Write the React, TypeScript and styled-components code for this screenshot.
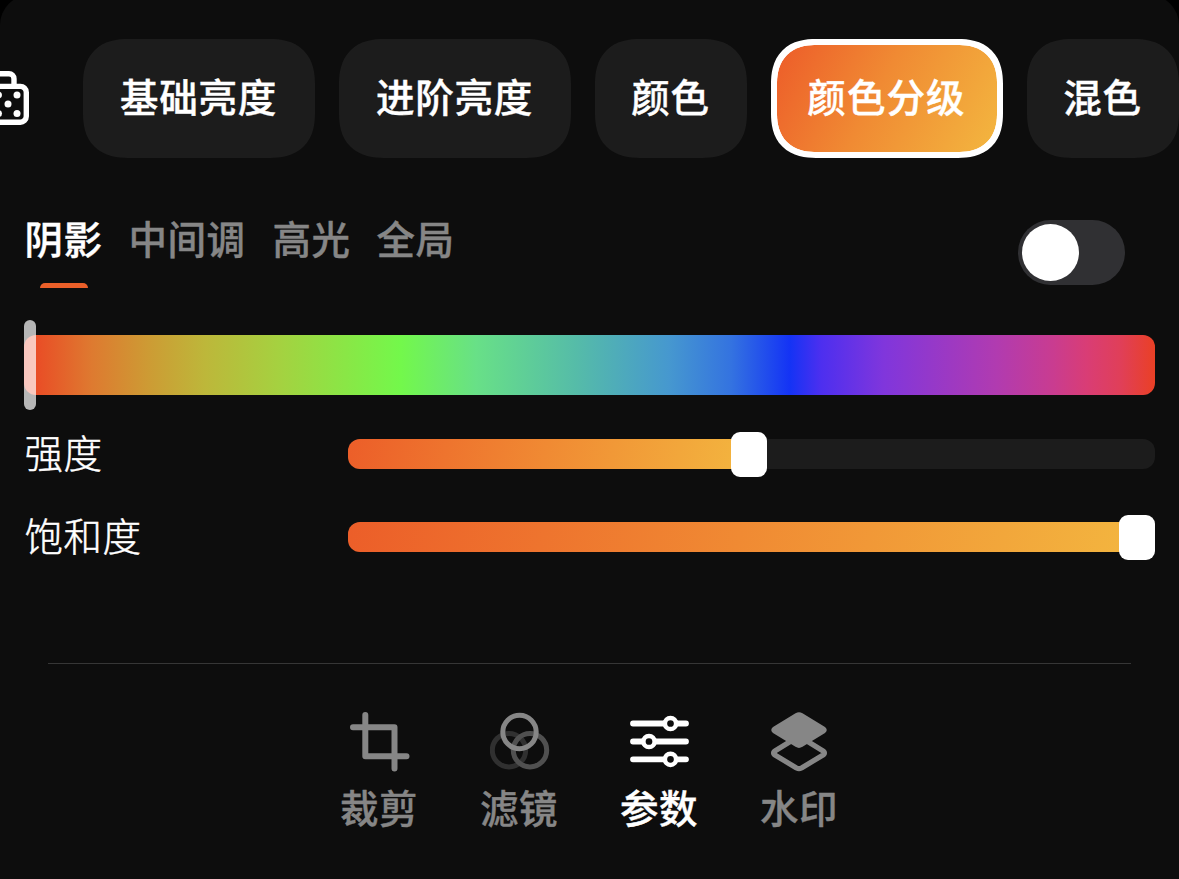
import React from "react";
import styled, { createGlobalStyle } from "styled-components";

const GlobalStyle = createGlobalStyle`
  * { box-sizing: border-box; }
  html, body { margin: 0; background: #000; }
  body { overflow: hidden; font-family: "Noto Sans CJK SC", sans-serif; }
  button { border: 0; padding: 0; background: none; font: inherit; color: inherit; }
`;

const Viewport = styled.div`
  height: 879px;
  overflow: hidden;
`;

const Sheet = styled.main`
  display: flex;
  flex-direction: column;
  height: 884px;
  margin-top: -5px;
  padding-top: 44px;
  background: #0d0d0d;
  border-radius: 30px 30px 0 0;
  color: #fff;
  overflow: hidden;
`;

const ChipRow = styled.nav`
  display: flex;
  align-items: center;
  gap: 24px;
  height: 119px;
`;

const DiceButton = styled.button`
  flex: none;
  width: 59px;
  height: 60px;
  svg { display: block; }
`;

const Chip = styled.button<{ $chars: number; $active?: boolean }>`
  flex: none;
  width: ${(p) => p.$chars * 40 + 72}px;
  height: 119px;
  border-radius: 39px;
  padding: 0 1px 7px 0;
  font-size: 38.5px;
  line-height: 56px;
  font-weight: 500;
  -webkit-text-stroke: 0.4px currentColor;
  letter-spacing: ${(p) => (p.$active ? "1.1px" : "0.7px")};
  background: ${(p) =>
    p.$active ? "linear-gradient(118deg, #ed5f2a 3%, #f08a33 45%, #f3b53f 98%) padding-box, #fff border-box" : "#1c1c1c"};
  border: ${(p) => (p.$active ? "6px solid #fff" : "0")};
  @supports (corner-shape: superellipse(1.25)) {
    border-radius: 45px;
    corner-shape: superellipse(1.25);
  }
`;

const RangeRow = styled.div`
  display: flex;
  justify-content: space-between;
  height: 162px;
  padding: 57px 54px 0 24px;
`;

const Tabs = styled.div`
  display: flex;
  gap: 24px;
`;

const Tab = styled.button<{ $chars: number; $active?: boolean }>`
  display: flex;
  flex-direction: column;
  align-items: flex-start;
  width: ${(p) => p.$chars * 40}px;
  height: 73px;
  font-size: 38.5px;
  line-height: 45px;
  font-weight: 500;
  letter-spacing: 0.5px;
  -webkit-text-stroke: 0.4px currentColor;
  text-indent: 0.5px;
  white-space: nowrap;
  color: ${(p) => (p.$active ? "#fff" : "#868686")};
`;

const Marker = styled.span`
  align-self: center;
  width: 48px;
  height: 5px;
  margin-top: 23px;
  border-radius: 6px 6px 0 0;
  background: #eb5f29;
`;

const Toggle = styled.button`
  width: 107px;
  height: 65px;
  margin-top: 5px;
  padding: 4px;
  border-radius: 33px;
  background: #303033;
`;

const Knob = styled.span`
  display: block;
  width: 57px;
  height: 57px;
  border-radius: 50%;
  background: #fff;
`;

const HueSlider = styled.div`
  display: flex;
  align-items: center;
  height: 90px;
  margin: 0 24px;
`;

const HueTrack = styled.div`
  display: flex;
  align-items: center;
  width: 100%;
  height: 60px;
  border-radius: 12px;
  background: linear-gradient(90deg, #ea4025 0%, #e94e26 1.2%, #de7a30 6%, #cd9b34 11%, #bdb73a 16%, #a5d140 22.5%, #73f84b 33.3%, #68e087 40%, #55bba9 49%, #4698cf 57%, #3473e0 62.5%, #1433f5 67.7%, #4d2fef 70.5%, #8036dc 76%, #b13bb0 86%, #c93c90 91%, #d93d75 94%, #e03f58 97%, #ea4025 100%);
`;

const HueHandle = styled.div`
  flex: none;
  width: 12px;
  height: 90px;
  border-radius: 6px;
  background: rgba(255, 255, 255, 0.7);
`;

const Sliders = styled.div`
  padding-top: 2.5px;
`;

const SliderRow = styled.label`
  display: flex;
  align-items: center;
  height: 83px;
  padding: 0 24px;
`;

const SliderName = styled.span`
  width: 324px;
  padding: 0 0 7px 0.5px;
  font-size: 38.5px;
  line-height: 50px;
  font-weight: 300;
  letter-spacing: 0.5px;
  -webkit-text-stroke: 0.5px currentColor;
`;

const Track = styled.span`
  display: flex;
  align-items: center;
  width: 807px;
  height: 30px;
  border-radius: 12px;
  background: #1c1c1c;
`;

const Fill = styled.span`
  height: 30px;
  margin-right: -12px;
  border-radius: 12px 0 0 12px;
  background: linear-gradient(100deg, #ec5e29, #f08a33 50%, #f3b53f);
`;

const Thumb = styled.span`
  flex: none;
  width: 36px;
  height: 45px;
  border-radius: 9px;
  background: #fff;
`;

const Divider = styled.hr`
  width: 1083px;
  height: 1px;
  margin: 84.5px auto 0;
  border: 0;
  background: #363636;
`;

const BottomBar = styled.nav`
  display: flex;
  justify-content: center;
  gap: 60px;
  padding-top: 48px;
`;

const BottomItem = styled.button<{ $active?: boolean }>`
  display: flex;
  flex-direction: column;
  align-items: center;
  width: 80px;
  font-size: 38.5px;
  line-height: 50px;
  font-weight: 500;
  -webkit-text-stroke: 0.4px currentColor;
  color: ${(p) => (p.$active ? "#fff" : "#868686")};
  svg { display: block; margin-bottom: 9px; }
`;

const ToolName = styled.span`
  padding-right: 1px;
  letter-spacing: 0.5px;
`;

const DiceIcon = () => (
  <svg width="30" height="60" viewBox="0 0 30 60" fill="none" stroke="#fff" strokeWidth="5.4">
    <path d="M-12 4.5H9a5 5 0 0 1 5 5v8M-20 17.200H20a6 6 0 0 1 6.300 6V47a6 6 0 0 1-6.300 6H-20" transform="translate(0 .2)" />
    <g fill="#fff" stroke="none">
      <circle cx="-1.500" cy="26" r="3.500" />
      <circle cx="17" cy="26" r="3.500" />
      <circle cx="8" cy="35" r="3.500" />
      <circle cx="-1.500" cy="44.500" r="3.500" />
      <circle cx="17" cy="44.500" r="3.500" />
    </g>
  </svg>
);

const CropIcon = () => (
  <svg width="60" height="60" viewBox="0 0 60 60" fill="none" stroke="currentColor" strokeWidth="6" strokeLinecap="round" strokeLinejoin="round">
    <path d="M15.300 3v41.300H56.500M3 15.200H44.500V56.500" />
  </svg>
);

const FilterIcon = () => (
  <svg width="60" height="60" viewBox="0 0 60 60" fill="none" strokeWidth="5">
    <circle cx="19" cy="38.200" r="16.700" stroke="#303030" />
    <circle cx="40" cy="38.200" r="16.700" stroke="#505050" />
    <circle cx="29.500" cy="20" r="16.700" stroke="#868686" />
  </svg>
);

const AdjustIcon = () => (
  <svg width="60" height="60" viewBox="0 0 60 60" fill="none" stroke="currentColor" strokeWidth="5.800" strokeLinecap="round">
    <path d="M3 11.500H56M3 29.500H56M3 47.300H56" />
    <g fill="#0d0d0d" strokeWidth="4.500">
      <circle cx="40.500" cy="11.500" r="5.600" />
      <circle cx="19" cy="29.500" r="5.600" />
      <circle cx="40.500" cy="47.300" r="5.600" />
    </g>
  </svg>
);

const LayersIcon = () => (
  <svg width="60" height="60" viewBox="0 0 60 60" fill="none" stroke="currentColor" strokeWidth="5.200" strokeLinejoin="round">
    <path d="M26.800 25.500 4.500 39.200Q2.500 41 4.500 42.700L26.500 56Q29 57.200 31.500 56L53.500 42.700Q55.500 41 53.500 39.200L31.200 25.500Z" />
    <path d="M25.500 1.200Q29-.9 32.500 1.200L55 15Q58.500 18 55 21L32.500 34.800Q29 37 25.500 34.800L3 21Q-.5 18 3 15Z" fill="currentColor" stroke="none" />
  </svg>
);

const chips = ["基础亮度", "进阶亮度", "颜色", "颜色分级", "混色"];
const tabs = ["阴影", "中间调", "高光", "全局"];
const sliders = [
  { name: "强度", fill: 395 },
  { name: "饱和度", fill: 783 },
];
const tools = [
  { name: "裁剪", Icon: CropIcon },
  { name: "滤镜", Icon: FilterIcon },
  { name: "参数", Icon: AdjustIcon },
  { name: "水印", Icon: LayersIcon },
];

export default function App() {
  return (
    <Viewport>
      <GlobalStyle />
      <Sheet>
        <ChipRow>
          <DiceButton><DiceIcon /></DiceButton>
          {chips.map((c) => (
            <Chip key={c} $chars={c.length} $active={c === "颜色分级"}>{c}</Chip>
          ))}
        </ChipRow>
        <RangeRow>
          <Tabs>
            {tabs.map((t, i) => (
              <Tab key={t} $chars={t.length} $active={i === 0}>
                {t}
                {i === 0 && <Marker />}
              </Tab>
            ))}
          </Tabs>
          <Toggle><Knob /></Toggle>
        </RangeRow>
        <HueSlider>
          <HueTrack><HueHandle /></HueTrack>
        </HueSlider>
        <Sliders>
          {sliders.map((s) => (
            <SliderRow key={s.name}>
              <SliderName>{s.name}</SliderName>
              <Track>
                <Fill style={{ width: s.fill }} />
                <Thumb />
              </Track>
            </SliderRow>
          ))}
        </Sliders>
        <Divider />
        <BottomBar>
          {tools.map(({ name, Icon }) => (
            <BottomItem key={name} $active={name === "参数"}>
              <Icon />
              <ToolName>{name}</ToolName>
            </BottomItem>
          ))}
        </BottomBar>
      </Sheet>
    </Viewport>
  );
}
